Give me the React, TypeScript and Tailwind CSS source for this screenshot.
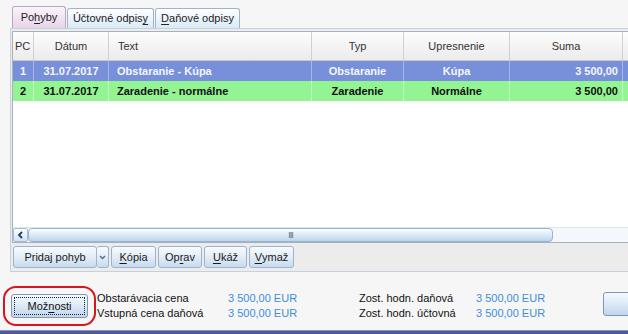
import React from 'react';

const font = { fontFamily: '"Liberation Sans", Arial, sans-serif' };

function U({ children }: { children: React.ReactNode }) {
  return <span className="underline underline-offset-[2px]">{children}</span>;
}

function Tab({ active, w, children }: { active?: boolean; w: string; children: React.ReactNode }) {
  return (
    <div
      className={
        active
          ? `${w} flex h-[22px] items-center justify-center rounded-t-[3px] border border-b-0 border-[#b8a8c0] bg-gradient-to-b from-[#fbf4fb] to-[#e8d4e8] text-[11px] text-[#222]`
          : `${w} flex h-[20px] items-center justify-center rounded-t-[3px] border border-b-0 border-[#9fb4cc] bg-gradient-to-b from-[#ffffff] to-[#d8eaf8] text-[11px] text-[#222]`
      }
    >
      {children}
    </div>
  );
}

function Btn({ w, children }: { w: string; children: React.ReactNode }) {
  return (
    <div
      className={`${w} flex h-[22px] shrink-0 items-center justify-center rounded-[3px] border border-[#9db3cc] bg-gradient-to-b from-[#f7fbff] via-[#e2edf8] to-[#c7dbef] text-[11px] text-[#1a1a1a]`}
    >
      {children}
    </div>
  );
}

const cols = ['w-[21px]', 'w-[75px]', 'w-[203px]', 'w-[92px]', 'w-[106px]', 'w-[113px]', 'w-[40px]'];

export default function App() {
  const rows = [
    { pc: '1', d: '31.07.2017', t: 'Obstaranie - Kúpa', typ: 'Obstaranie', up: 'Kúpa', s: '3 500,00', blue: true },
    { pc: '2', d: '31.07.2017', t: 'Zaradenie - normálne', typ: 'Zaradenie', up: 'Normálne', s: '3 500,00', blue: false },
  ];

  return (
    <div className="relative flex h-[334px] w-[628px] flex-col overflow-hidden bg-[#f6f6f7]" style={font}>
      <div className="flex h-[28px] items-end gap-[1px] pl-[12px]">
        <Tab active w="w-[54px]">
          Po<U>h</U>yby
        </Tab>
        <Tab w="w-[87px]">
          Účtovné odpis<U>y</U>
        </Tab>
        <Tab w="w-[85px]">
          <U>D</U>aňové odpisy
        </Tab>
      </div>

      <div className="ml-[10px] mr-[-20px] flex h-[244px] flex-col border border-[#c8d0dc] bg-[#ececec] pl-[1px] pt-[2px]">
        <div className="flex flex-1 flex-col border border-[#a8b0bc] bg-white">
          <div className="flex h-[29px] border-b border-[#c8c8c8] bg-gradient-to-b from-[#fdfdfd] to-[#ebebeb] text-[11px] text-[#333]">
            {['PC', 'Dátum', 'Text', 'Typ', 'Upresnenie', 'Suma', ''].map((h, i) => (
              <div
                key={i}
                className={`${cols[i]} flex shrink-0 items-center border-r border-[#d0d0d0] ${
                  i === 0 ? 'pl-[2px]' : i === 2 ? 'pl-[9px]' : 'justify-center'
                }`}
              >
                {h}
              </div>
            ))}
          </div>
          {rows.map((r) => (
            <div
              key={r.pc}
              className={`flex h-[20px] text-[11px] font-bold ${
                r.blue ? 'bg-[#7890d9] text-[#f4f6ff]' : 'bg-[#92f492] text-[#111]'
              }`}
            >
              {[r.pc, r.d, r.t, r.typ, r.up, r.s, ''].map((c, i) => (
                <div
                  key={i}
                  className={`${cols[i]} flex shrink-0 items-center border-r ${
                    r.blue ? 'border-[#a7b6e8]' : 'border-[#c6f8c6]'
                  } ${i === 2 ? 'pl-[8px]' : i === 5 ? 'justify-end pr-[4px]' : 'justify-center'}`}
                >
                  {c}
                </div>
              ))}
            </div>
          ))}
          <div className="flex-1" />
          <div className="flex h-[15px] items-center border-t border-[#e0e6ee] bg-[#f4f8fc]">
            <div className="flex h-[14px] w-[15px] items-center justify-center rounded-[2px] border border-[#a8bcd4] bg-gradient-to-b from-[#ffffff] to-[#d0e2f2]">
              <svg width="7" height="8" viewBox="0 0 7 8">
                <path d="M5 1 L2 4 L5 7" stroke="#1e3c6e" strokeWidth="1.8" fill="none" />
              </svg>
            </div>
            <div className="relative flex h-[14px] w-[525px] items-center justify-center rounded-[4px] border border-[#98b4d4] bg-gradient-to-b from-[#fbfdff] via-[#dceaf7] to-[#bcd4ec]">
              <span className="text-[9px] leading-none tracking-[-1px] text-[#5a6a80]">III</span>
            </div>
          </div>
        </div>
        <div className="flex h-[28px] items-center gap-[2px] pl-[1px]">
          <div className="flex">
            <Btn w="w-[84px]">Pridaj pohyb</Btn>
            <div className="flex h-[22px] w-[12px] items-center justify-center rounded-[3px] border border-l-0 border-[#9db3cc] bg-gradient-to-b from-[#f7fbff] via-[#e2edf8] to-[#c7dbef]">
              <svg width="7" height="5" viewBox="0 0 7 5">
                <path d="M1 1 L3.5 3.5 L6 1" stroke="#4a6a90" strokeWidth="1.3" fill="none" />
              </svg>
            </div>
          </div>
          <Btn w="w-[45px]">
            <U>K</U>ópia
          </Btn>
          <Btn w="w-[44px]">
            Op<U>r</U>av
          </Btn>
          <Btn w="w-[43px]">
            <U>U</U>káž
          </Btn>
          <Btn w="w-[45px]">
            <U>V</U>ymaž
          </Btn>
        </div>
      </div>

      <div className="flex flex-1 items-start whitespace-nowrap pl-[3px] pt-[14px] text-[11px]">
        <div className="flex h-[40px] w-[93px] shrink-0 items-center justify-center rounded-[13px] border-2 border-[#d8141c]">
          <div className="flex h-[24px] w-[77px] items-center justify-center rounded-[3px] border border-[#7f96b4] bg-gradient-to-b from-[#f6faff] via-[#dce9f6] to-[#bfd6ee] text-[#111]">
            <div className="flex h-[18px] w-[71px] items-center justify-center border border-dotted border-[#222]">
              Mož<U>n</U>osti
            </div>
          </div>
        </div>
        <div className="ml-[1px] mt-[5px] flex w-[131px] shrink-0 flex-col leading-[15px] text-[#111]">
          <span>Obstarávacia cena</span>
          <span>Vstupná cena daňová</span>
        </div>
        <div className="mt-[5px] flex w-[131px] shrink-0 flex-col leading-[15px] text-[#3d8ede]">
          <span>3 500,00 EUR</span>
          <span>3 500,00 EUR</span>
        </div>
        <div className="mt-[5px] flex w-[117px] shrink-0 flex-col leading-[15px] text-[#111]">
          <span>Zost. hodn. daňová</span>
          <span>Zost. hodn. účtovná</span>
        </div>
        <div className="mt-[5px] flex w-[127px] shrink-0 flex-col leading-[15px] text-[#3d8ede]">
          <span>3 500,00 EUR</span>
          <span>3 500,00 EUR</span>
        </div>
        <div className="mt-[6px] h-[24px] w-[60px] shrink-0 rounded-[3px] border border-[#7f96b4] bg-gradient-to-b from-[#f6faff] via-[#dce9f6] to-[#bfd6ee]" />
      </div>
      <div className="h-[4px] shrink-0 border-t border-[#8890c0] bg-[#4c5a9a]" />
    </div>
  );
}
